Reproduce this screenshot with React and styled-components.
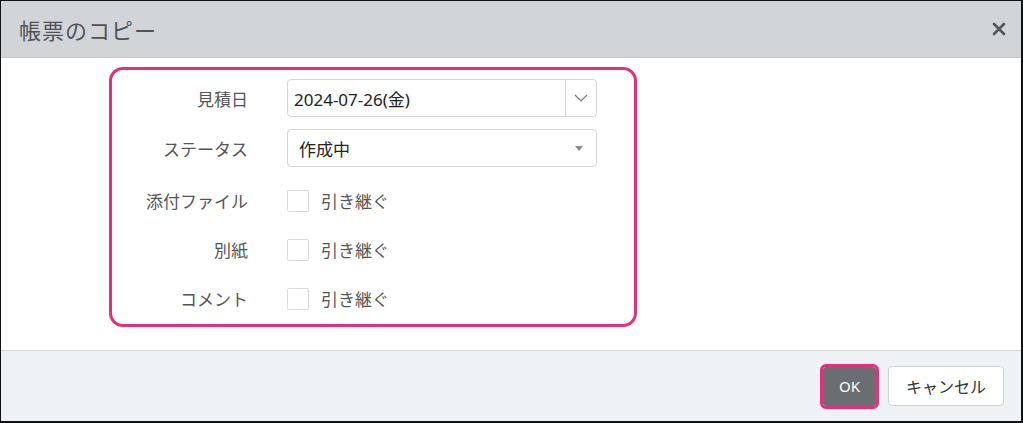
import React from 'react';
import styled, { createGlobalStyle } from 'styled-components';

const GlobalStyle = createGlobalStyle`
  html, body {
    margin: 0;
    padding: 0;
    background: #fff;
  }
  body {
    font-family: "Noto Sans", "Noto Sans CJK JP", sans-serif;
  }
`;

const Dialog = styled.div`
  width: 1023px;
  height: 423px;
  box-sizing: border-box;
  border: 1px solid #111;
  border-right-width: 2px;
  border-bottom-width: 2px;
  display: flex;
  flex-direction: column;
  background: #fff;
`;

const Header = styled.div`
  height: 56px;
  flex-shrink: 0;
  background: #d2d5d8;
  border-bottom: 1px solid #c4c7ca;
  display: flex;
  align-items: center;
  justify-content: space-between;
  padding: 0 14px 0 18px;
`;

const Title = styled.h1`
  margin: 0;
  font-size: 22px;
  font-weight: 400;
  color: #505356;
  letter-spacing: 1px;
`;

const CloseButton = styled.button`
  background: none;
  border: none;
  padding: 0;
  width: 16px;
  height: 16px;
  display: flex;
  align-items: center;
  justify-content: center;
  color: #555;
  cursor: pointer;
`;

const Body = styled.div`
  flex: 1;
  padding: 9px 0 0 108px;
`;

const Highlight = styled.div`
  width: 528px;
  box-sizing: border-box;
  border: 3px solid #e2307a;
  border-radius: 14px;
  padding: 9px 37px 7px 0;
  display: flex;
  flex-direction: column;
  gap: 12px;
`;

const Row = styled.div`
  display: grid;
  grid-template-columns: 136px 1fr;
  column-gap: 39px;
  align-items: center;
  height: ${p => p.$h || 38}px;
  margin-top: ${p => p.$mt || 0}px;
`;

const Label = styled.div`
  text-align: right;
  font-size: 17px;
  color: #555;
`;

const InputBox = styled.div`
  height: 38px;
  box-sizing: border-box;
  border: 1px solid #d3d6d9;
  border-radius: 4px;
  display: flex;
  align-items: center;
  font-size: 17px;
  color: #222;
  background: #fff;
`;

const DateText = styled.div`
  flex: 1;
  padding-left: 6px;
`;

const DropButton = styled.div`
  width: 30px;
  height: 100%;
  border-left: 1px solid #d3d6d9;
  display: flex;
  align-items: center;
  justify-content: center;
`;

const SelectText = styled.div`
  flex: 1;
  padding-left: 11px;
`;

const Caret = styled.div`
  width: 0;
  height: 0;
  border-left: 4px solid transparent;
  border-right: 4px solid transparent;
  border-top: 5px solid #8a8d90;
  margin-right: 13px;
`;

const CheckLine = styled.label`
  display: flex;
  align-items: center;
  gap: 12px;
  font-size: 17px;
  color: #555;
`;

const Box = styled.span`
  width: 22px;
  height: 22px;
  box-sizing: border-box;
  border: 1px solid #d9dbdd;
  border-radius: 2px;
  background: #fff;
`;

const Footer = styled.div`
  height: 70px;
  flex-shrink: 0;
  background: #eff2f5;
  border-top: 1px solid #d6d9dc;
  display: flex;
  align-items: center;
  justify-content: flex-end;
  gap: 9px;
  padding-right: 17px;
`;

const OkFrame = styled.div`
  border: 3px solid #e2307a;
  border-radius: 6px;
  display: flex;
`;

const OkButton = styled.button`
  width: 53px;
  height: 39px;
  border: none;
  border-radius: 3px;
  background: #6b6e71;
  color: #fff;
  font-family: inherit;
  font-size: 15px;
  cursor: pointer;
`;

const CancelButton = styled.button`
  width: 116px;
  height: 40px;
  border: 1px solid #cfd2d5;
  border-radius: 4px;
  background: #fff;
  color: #333;
  font-family: inherit;
  font-size: 16px;
  cursor: pointer;
`;

const checkRows = ['添付ファイル', '別紙', 'コメント'];

export default function App() {
  return (
    <>
      <GlobalStyle />
      <Dialog>
        <Header>
          <Title>帳票のコピー</Title>
          <CloseButton aria-label="close">
            <svg width="14" height="14" viewBox="0 0 14 14">
              <path d="M2 2 L12 12 M12 2 L2 12" stroke="currentColor" strokeWidth="2.6" strokeLinecap="round" />
            </svg>
          </CloseButton>
        </Header>
        <Body>
          <Highlight>
            <Row>
              <Label>見積日</Label>
              <InputBox>
                <DateText>2024-07-26(金)</DateText>
                <DropButton>
                  <svg width="14" height="8" viewBox="0 0 14 8">
                    <path d="M1 1 L7 7 L13 1" fill="none" stroke="#777" strokeWidth="1.2" />
                  </svg>
                </DropButton>
              </InputBox>
            </Row>
            <Row>
              <Label>ステータス</Label>
              <InputBox>
                <SelectText>作成中</SelectText>
                <Caret />
              </InputBox>
            </Row>
            {checkRows.map((l, i) => (
              <Row key={l} $h={37} $mt={i === 0 ? 3 : 0}>
                <Label>{l}</Label>
                <CheckLine>
                  <Box />
                  引き継ぐ
                </CheckLine>
              </Row>
            ))}
          </Highlight>
        </Body>
        <Footer>
          <OkFrame>
            <OkButton>OK</OkButton>
          </OkFrame>
          <CancelButton>キャンセル</CancelButton>
        </Footer>
      </Dialog>
    </>
  );
}
